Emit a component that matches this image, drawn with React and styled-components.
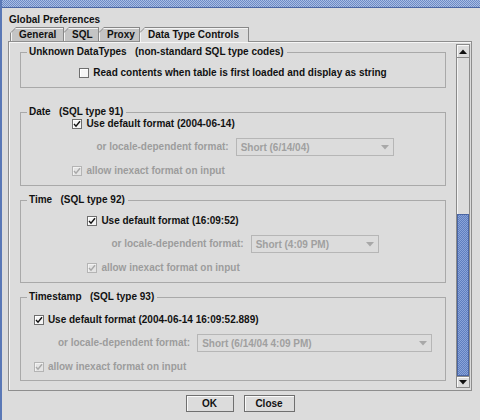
import React from 'react';
import styled, { createGlobalStyle } from 'styled-components';

const GlobalStyle = createGlobalStyle`
  html, body {
    margin: 0;
    padding: 0;
    background: #dcdcdc;
  }
  body {
    font-family: "Liberation Sans", Arial, sans-serif;
    font-size: 10px;
    font-weight: bold;
    color: #111;
  }
`;

const Window = styled.div`
  width: 480px;
  height: 420px;
  box-sizing: border-box;
  border-left: 2px solid #5a78b6;
  background: #dcdcdc;
  display: flex;
  flex-direction: column;
  overflow: hidden;
`;

const TitleStrip = styled.div`
  height: 7px;
  border-bottom: 1px solid #4a66a2;
  background: repeating-conic-gradient(#a9bde3 0 25%, #6d8bc6 0 50%) 0 0 / 2px 2px;
`;

const Heading = styled.div`
  padding: 6px 0 0 7px;
  line-height: 12px;
  height: 12px;
  margin-bottom: 1px;
`;

const TabRow = styled.div`
  display: flex;
  align-items: flex-end;
  height: 14px;
  padding-left: 8px;
  position: relative;
  z-index: 1;
`;

const Tab = styled.div`
  width: ${p => p.$w}px;
  height: ${p => (p.$active ? 15 : 14)}px;
  margin-bottom: ${p => (p.$active ? -1 : 0)}px;
  margin-right: -1px;
  box-sizing: border-box;
  padding: 1px 1px 0 1px;
  background: #888;
  clip-path: polygon(0 6px, 6px 0, 100% 0, 100% 100%, 0 100%);
  display: flex;
`;

const TabFace = styled.div`
  flex: 1;
  background: ${p => (p.$active ? '#dcdcdc' : '#c4c4c4')};
  box-shadow: inset 1px 1px 0 #f4f4f4;
  clip-path: polygon(0 5px, 5px 0, 100% 0, 100% 100%, 0 100%);
  display: flex;
  align-items: center;
  padding-left: ${p => (p.$active ? 8 : 8)}px;
  line-height: 12px;
`;

const Panel = styled.div`
  height: 350px;
  margin: 0 8px 0 6px;
  box-sizing: border-box;
  border: 1px solid #8e8e8e;
  box-shadow: inset 1px 1px 0 #f6f6f6;
  padding: 2px 1px 2px 0;
  display: flex;
`;

const Viewport = styled.div`
  flex: 1;
  overflow: hidden;
  padding: 2px 10px 0 11px;
  display: flex;
  flex-direction: column;
`;

const Section = styled.fieldset`
  margin: ${p => p.$mt}px 0 0 0;
  padding: ${p => p.$pt}px 4px ${p => p.$pb}px 4px;
  border: 1px solid #a9a9a9;
  min-width: 0;
  display: flex;
  justify-content: center;
`;

const Legend = styled.legend`
  padding: 0 3px 0 2px;
  margin-left: 2px;
  line-height: 12px;
  white-space: pre;
  color: #111;
`;

const FormGrid = styled.div`
  display: grid;
  grid-template-columns: auto auto;
  column-gap: 7px;
  row-gap: 8px;
  align-items: center;
`;

const CheckRow = styled.label`
  grid-column: 1 / span 2;
  display: flex;
  align-items: center;
  gap: 4px;
  height: 12px;
  line-height: 12px;
  margin-top: ${p => p.$mt || 0}px;
  color: ${p => (p.$disabled ? '#9c9c9c' : '#111')};
  white-space: nowrap;
`;

const Box = styled.span`
  width: 10px;
  height: 10px;
  flex: none;
  box-sizing: border-box;
  border: 1px solid ${p => (p.$disabled ? '#b4b4b4' : '#6e6e6e')};
  background: ${p => (p.$disabled ? '#e4e4e4' : '#f4f4f4')};
  box-shadow: inset 1px 1px 0 ${p => (p.$disabled ? '#f2f2f2' : '#ffffff')};
  display: flex;
  align-items: center;
  justify-content: center;
`;

const LocaleLabel = styled.span`
  padding-left: 24px;
  text-align: right;
  color: #9c9c9c;
  white-space: nowrap;
  line-height: 12px;
`;

const Combo = styled.div`
  width: ${p => p.$w}px;
  height: 18px;
  box-sizing: border-box;
  border: 1px solid #b6b6b6;
  display: flex;
  align-items: center;
  justify-content: space-between;
  padding: 0 4px 0 4px;
  color: #a0a0a0;
  white-space: nowrap;
`;

const ScrollBar = styled.div`
  width: 14px;
  display: flex;
  flex-direction: column;
`;

const ArrowButton = styled.div`
  height: ${p => p.$h}px;
  box-sizing: border-box;
  border: 1px solid #8a8a8a;
  box-shadow: inset 1px 1px 0 #fafafa;
  background: #dcdcdc;
  display: flex;
  align-items: center;
  justify-content: center;
`;

const Track = styled.div`
  flex: 1;
  border-left: 1px solid #8a8a8a;
  border-right: 1px solid #8a8a8a;
  box-shadow: inset 1px 0 0 #f4f4f4;
  display: flex;
  flex-direction: column;
  justify-content: flex-end;
`;

const Thumb = styled.div`
  height: 162px;
  box-sizing: border-box;
  border: 1px solid #4a65a3;
  background: repeating-conic-gradient(#8aa4d8 0 25%, #5f7ec0 0 50%) 0 0 / 2px 2px;
`;

const ButtonRow = styled.div`
  display: flex;
  justify-content: center;
  gap: 10px;
  padding: 4px 2px 0 0;
`;

const Button = styled.button`
  width: ${p => p.$w}px;
  height: 17px;
  box-sizing: border-box;
  border: 1px solid #6f6f6f;
  box-shadow: inset 1px 1px 0 #fafafa;
  background: #dcdcdc;
  font: inherit;
  color: #111;
  padding: 0;
  line-height: 14px;
`;

const Check = ({ disabled }) => (
  <svg width="8" height="8" viewBox="0 0 8 8">
    <path d="M1 4 L3 6.2 L7 1.2" fill="none" stroke={disabled ? '#a8a8a8' : '#111'} strokeWidth="1.4" />
  </svg>
);

const CheckBox = ({ checked, disabled, children, mt }) => (
  <CheckRow $disabled={disabled} $mt={mt}>
    <Box $disabled={disabled}>{checked && <Check disabled={disabled} />}</Box>
    {children}
  </CheckRow>
);

const DownArrow = ({ color }) => (
  <svg width="8" height="5" viewBox="0 0 8 5">
    <path d="M0 0 H8 L4 4.5 Z" fill={color} />
  </svg>
);

const UpArrow = () => (
  <svg width="8" height="5" viewBox="0 0 8 5">
    <path d="M0 5 H8 L4 0.5 Z" fill="#111" />
  </svg>
);

const sections = [
  { title: 'Date   (SQL type 91)', def: '2004-06-14', combo: 'Short (6/14/04)', w: 158, mt: 18, pt: 0, pb: 8 },
  { title: 'Time   (SQL type 92)', def: '16:09:52', combo: 'Short (4:09 PM)', w: 128, mt: 8, pt: 9, pb: 8 },
  { title: 'Timestamp   (SQL type 93)', def: '2004-06-14 16:09:52.889', combo: 'Short (6/14/04 4:09 PM)', w: 235, mt: 8, pt: 11, pb: 7 },
];

function App() {
  return (
    <Window>
      <GlobalStyle />
      <TitleStrip />
      <Heading>Global Preferences</Heading>
      <TabRow>
        <Tab $w={54}><TabFace>General</TabFace></Tab>
        <Tab $w={36}><TabFace>SQL</TabFace></Tab>
        <Tab $w={42}><TabFace>Proxy</TabFace></Tab>
        <Tab $w={110} $active><TabFace $active>Data Type Controls</TabFace></Tab>
      </TabRow>
      <Panel>
        <Viewport>
          <Section $mt={0} $pt={9} $pb={8}>
            <Legend>{'Unknown DataTypes   (non-standard SQL type codes)'}</Legend>
            <FormGrid>
              <CheckBox>Read contents when table is first loaded and display as string</CheckBox>
            </FormGrid>
          </Section>
          {sections.map(s => (
            <Section key={s.title} $mt={s.mt} $pt={s.pt} $pb={s.pb}>
              <Legend>{s.title}</Legend>
              <FormGrid>
                <CheckBox checked>Use default format ({s.def})</CheckBox>
                <LocaleLabel>or locale-dependent format:</LocaleLabel>
                <Combo $w={s.w}>
                  <span>{s.combo}</span>
                  <DownArrow color="#a8a8a8" />
                </Combo>
                <CheckBox checked disabled mt={1}>allow inexact format on input</CheckBox>
              </FormGrid>
            </Section>
          ))}
        </Viewport>
        <ScrollBar>
          <ArrowButton $h={14}><UpArrow /></ArrowButton>
          <Track><Thumb /></Track>
          <ArrowButton $h={12}><DownArrow color="#111" /></ArrowButton>
        </ScrollBar>
      </Panel>
      <ButtonRow>
        <Button $w={48}>OK</Button>
        <Button $w={51}>Close</Button>
      </ButtonRow>
    </Window>
  );
}

export default App;
